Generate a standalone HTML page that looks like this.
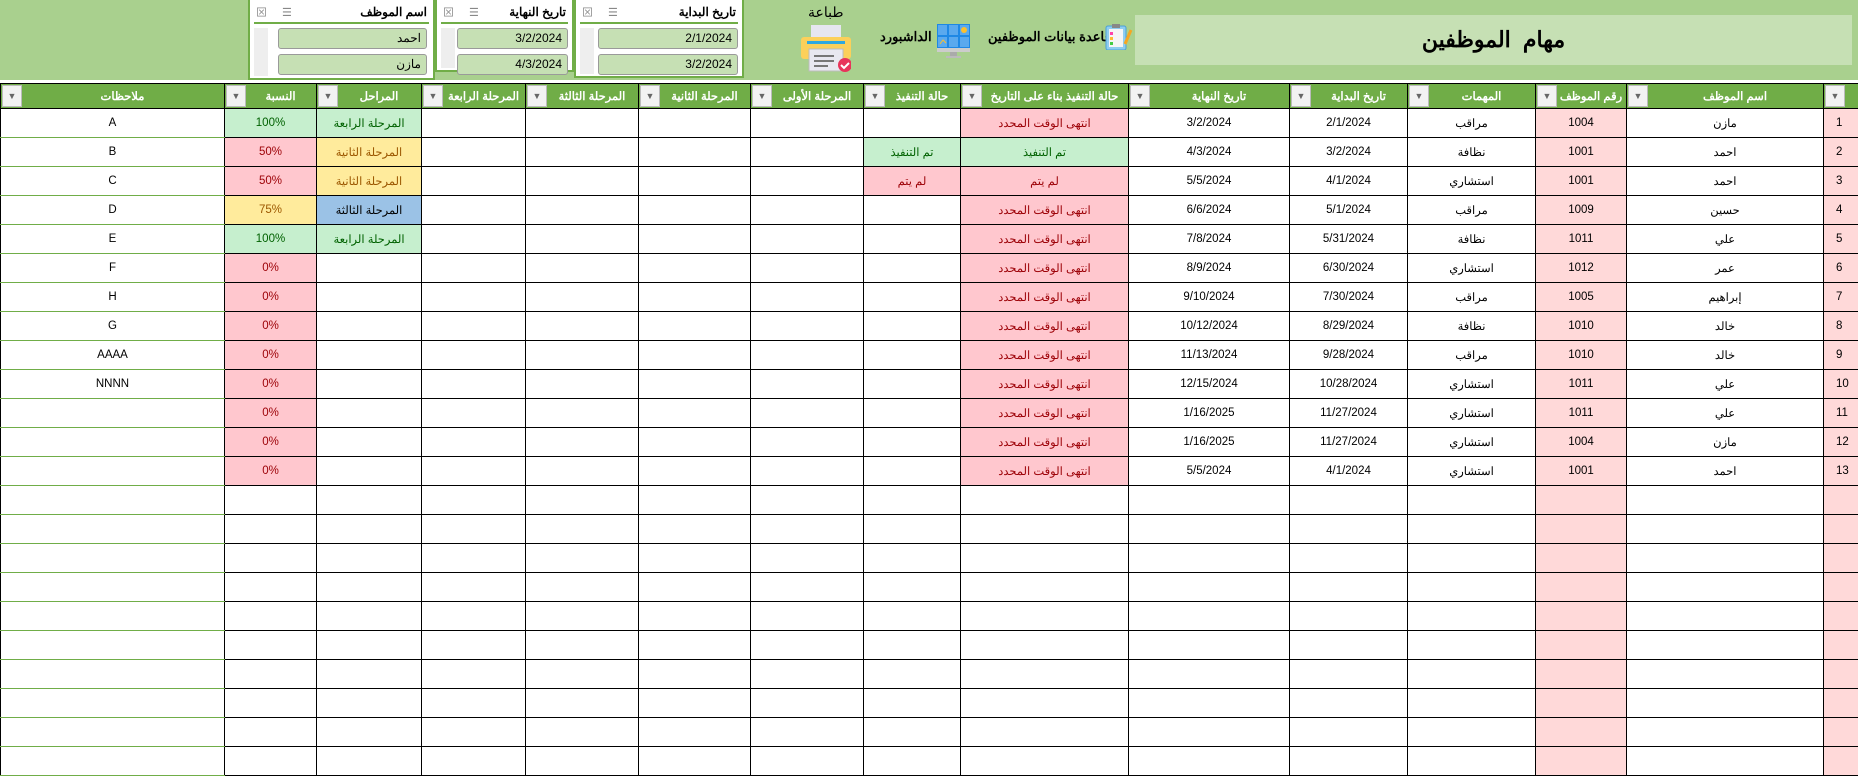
<!DOCTYPE html>
<html><head><meta charset="utf-8"><style>
*{box-sizing:border-box;margin:0;padding:0}
body{width:1858px;height:757px;overflow:hidden;background:#fff;font-family:"Liberation Sans","Noto Sans CJK SC",sans-serif;position:relative}
.top{position:absolute;left:0;top:0;width:1858px;height:80px;background:#a9d08e}
.title{position:absolute;left:1135px;top:15px;width:717px;height:50px;background:#c6e0b4;text-align:center;font-size:22px;font-weight:bold;line-height:50px;word-spacing:6px}
.lbl{position:absolute;font-size:14px;color:#000;white-space:nowrap}
.sl{position:absolute;top:0;background:#fff;border:2px solid #70ad47;border-top:none}
.sl .h{position:absolute;right:6px;top:5px;font-size:12px;font-weight:bold}
.sl .ln{position:absolute;left:4px;right:4px;top:22px;height:2px;background:#70ad47}
.sl .ic{position:absolute;left:6px;top:4px;font-size:11px;color:#888;letter-spacing:6px}
.sl .it{position:absolute;height:21px;background:#c6e0b4;border:1px solid #9a9a9a;border-radius:3px;font-size:12px;text-align:right;padding-right:5px;line-height:19px}
.sl .sb{position:absolute;left:4px;top:28px;width:14px;bottom:2px;background:#eee}
table{position:absolute;left:0;top:83px;border-collapse:collapse;table-layout:fixed;width:1858px}
td{height:29px;border:1px solid #000;font-size:11.5px;text-align:center;direction:rtl;overflow:hidden;white-space:nowrap}
tr.hd td{height:25px;background:#70ad47;color:#fff;font-weight:bold;position:relative;padding-left:20px;font-size:11.5px}
tr.hd td .dd{position:absolute;left:1px;top:1px;width:20px;height:22px;background:#f2f2f2;border:1px solid #bbb;color:#666;font-size:9px;line-height:20px;text-align:center}
td.n{border-bottom-color:#70ad47;border-top-color:#70ad47}
.pk{background:#ffc7ce;color:#9c0006}
.gr{background:#c6efce;color:#006100}
.ye{background:#ffeb9c;color:#9c5700}
.bl{background:#9bc2e6;color:#000}
.lp{background:#ffd9d9}
td.num{text-align:left;padding-left:12px;background:#ffd9d9}
</style></head><body>
<div class="top"></div>
<div class="title">مهام الموظفين</div>

<div class="lbl" style="left:808px;top:4px;font-size:14px">طباعة</div>
<svg style="position:absolute;left:801px;top:25px" width="50" height="47" viewBox="0 0 50 47">
<rect x="10" y="0" width="30" height="12" fill="#e6e6f0"/>
<rect x="0" y="12" width="50" height="22" rx="3" fill="#fcd05a"/>
<rect x="6" y="16" width="38" height="3" fill="#2fa8e0"/>
<rect x="8" y="24" width="34" height="22" fill="#e8e8f0" stroke="#bbb"/>
<rect x="13" y="30" width="20" height="2" fill="#777"/><rect x="13" y="35" width="20" height="2" fill="#777"/><rect x="13" y="40" width="14" height="2" fill="#777"/>
<circle cx="44" cy="40" r="7" fill="#e8345a"/><path d="M40 40l3 3 5-5" stroke="#fff" stroke-width="2" fill="none"/>
</svg>
<div class="lbl" style="left:880px;top:29px;font-weight:bold;font-size:13px">الداشبورد</div>
<svg style="position:absolute;left:937px;top:24px" width="33" height="34" viewBox="0 0 33 34">
<rect x="0" y="0" width="33" height="24" fill="#1e88e5"/>
<rect x="1" y="1" width="9" height="10" fill="#5aa9ee"/><rect x="12" y="1" width="9" height="10" fill="#5aa9ee"/><rect x="23" y="1" width="9" height="10" fill="#5aa9ee"/>
<rect x="1" y="13" width="9" height="10" fill="#5aa9ee"/><rect x="12" y="13" width="9" height="10" fill="#5aa9ee"/><rect x="23" y="13" width="9" height="10" fill="#5aa9ee"/>
<circle cx="27" cy="6" r="3" fill="#fbc02d"/><path d="M3 20l3-4 3 3" stroke="#fbc02d" fill="none"/>
<rect x="0" y="24" width="33" height="4" fill="#ccc"/><rect x="13" y="28" width="7" height="4" fill="#aaa"/><rect x="9" y="32" width="15" height="2" fill="#bbb"/>
</svg>
<div class="lbl" style="left:988px;top:29px;font-weight:bold;font-size:13px">قاعدة بيانات الموظفين</div>
<svg style="position:absolute;left:1105px;top:24px" width="28" height="26" viewBox="0 0 28 26">
<rect x="1" y="2" width="20" height="24" rx="2" fill="#8ecdf0" stroke="#4a9fd6"/>
<rect x="4" y="5" width="14" height="18" fill="#f5f5f5"/>
<rect x="7" y="0" width="8" height="4" fill="#888"/>
<rect x="5" y="8" width="3" height="3" fill="#f4a"/><rect x="5" y="13" width="3" height="3" fill="#fb3"/><rect x="5" y="18" width="3" height="3" fill="#4c4"/>
<path d="M26 6l-6 14" stroke="#f5a623" stroke-width="3"/>
</svg>

<div class="sl" style="left:574px;width:170px;height:78px">
<div class="h">تاريخ البداية</div><div class="ic">⊠ ☰</div><div class="ln"></div><div class="sb"></div>
<div class="it" style="left:22px;right:4px;top:28px">2/1/2024</div>
<div class="it" style="left:22px;right:4px;top:54px">3/2/2024</div>
</div>
<div class="sl" style="left:435px;width:139px;height:72px">
<div class="h">تاريخ النهاية</div><div class="ic">⊠ ☰</div><div class="ln"></div><div class="sb"></div>
<div class="it" style="left:20px;right:4px;top:28px">3/2/2024</div>
<div class="it" style="left:20px;right:4px;top:54px">4/3/2024</div>
</div>
<div class="sl" style="left:248px;width:187px;height:80px">
<div class="h">اسم الموظف</div><div class="ic">⊠ ☰</div><div class="ln"></div><div class="sb"></div>
<div class="it" style="left:28px;right:6px;top:28px">احمد</div>
<div class="it" style="left:28px;right:6px;top:54px">مازن</div>
</div>

<table>
<colgroup><col style="width:224px"><col style="width:92px"><col style="width:105px"><col style="width:104px"><col style="width:113px"><col style="width:112px"><col style="width:113px"><col style="width:97px"><col style="width:168px"><col style="width:161px"><col style="width:118px"><col style="width:128px"><col style="width:91px"><col style="width:197px"><col style="width:35px"></colgroup>
<tr class="hd"><td><span class="dd">▼</span>ملاحظات</td><td><span class="dd">▼</span>النسبة</td><td><span class="dd">▼</span>المراحل</td><td><span class="dd">▼</span>المرحلة الرابعة</td><td><span class="dd">▼</span>المرحلة الثالثة</td><td><span class="dd">▼</span>المرحلة الثانية</td><td><span class="dd">▼</span>المرحلة الأولى</td><td><span class="dd">▼</span>حالة التنفيذ</td><td><span class="dd">▼</span>حالة التنفيذ بناء على التاريخ</td><td><span class="dd">▼</span>تاريخ النهاية</td><td><span class="dd">▼</span>تاريخ البداية</td><td><span class="dd">▼</span>المهمات</td><td><span class="dd">▼</span>رقم الموظف</td><td><span class="dd">▼</span>اسم الموظف</td><td><span class="dd">▼</span></td></tr>
<tr><td class="n">A</td><td class="gr">100%</td><td class="gr">المرحلة الرابعة</td><td></td><td></td><td></td><td></td><td></td><td class="pk">انتهى الوقت المحدد</td><td>3/2/2024</td><td>2/1/2024</td><td>مراقب</td><td class="lp">1004</td><td>مازن</td><td class="num">1</td></tr>
<tr><td class="n">B</td><td class="pk">50%</td><td class="ye">المرحلة الثانية</td><td></td><td></td><td></td><td></td><td class="gr">تم التنفيذ</td><td class="gr">تم التنفيذ</td><td>4/3/2024</td><td>3/2/2024</td><td>نظافة</td><td class="lp">1001</td><td>احمد</td><td class="num">2</td></tr>
<tr><td class="n">C</td><td class="pk">50%</td><td class="ye">المرحلة الثانية</td><td></td><td></td><td></td><td></td><td class="pk">لم يتم</td><td class="pk">لم يتم</td><td>5/5/2024</td><td>4/1/2024</td><td>استشاري</td><td class="lp">1001</td><td>احمد</td><td class="num">3</td></tr>
<tr><td class="n">D</td><td class="ye">75%</td><td class="bl">المرحلة الثالثة</td><td></td><td></td><td></td><td></td><td></td><td class="pk">انتهى الوقت المحدد</td><td>6/6/2024</td><td>5/1/2024</td><td>مراقب</td><td class="lp">1009</td><td>حسين</td><td class="num">4</td></tr>
<tr><td class="n">E</td><td class="gr">100%</td><td class="gr">المرحلة الرابعة</td><td></td><td></td><td></td><td></td><td></td><td class="pk">انتهى الوقت المحدد</td><td>7/8/2024</td><td>5/31/2024</td><td>نظافة</td><td class="lp">1011</td><td>علي</td><td class="num">5</td></tr>
<tr><td class="n">F</td><td class="pk">0%</td><td></td><td></td><td></td><td></td><td></td><td></td><td class="pk">انتهى الوقت المحدد</td><td>8/9/2024</td><td>6/30/2024</td><td>استشاري</td><td class="lp">1012</td><td>عمر</td><td class="num">6</td></tr>
<tr><td class="n">H</td><td class="pk">0%</td><td></td><td></td><td></td><td></td><td></td><td></td><td class="pk">انتهى الوقت المحدد</td><td>9/10/2024</td><td>7/30/2024</td><td>مراقب</td><td class="lp">1005</td><td>إبراهيم</td><td class="num">7</td></tr>
<tr><td class="n">G</td><td class="pk">0%</td><td></td><td></td><td></td><td></td><td></td><td></td><td class="pk">انتهى الوقت المحدد</td><td>10/12/2024</td><td>8/29/2024</td><td>نظافة</td><td class="lp">1010</td><td>خالد</td><td class="num">8</td></tr>
<tr><td class="n">AAAA</td><td class="pk">0%</td><td></td><td></td><td></td><td></td><td></td><td></td><td class="pk">انتهى الوقت المحدد</td><td>11/13/2024</td><td>9/28/2024</td><td>مراقب</td><td class="lp">1010</td><td>خالد</td><td class="num">9</td></tr>
<tr><td class="n">NNNN</td><td class="pk">0%</td><td></td><td></td><td></td><td></td><td></td><td></td><td class="pk">انتهى الوقت المحدد</td><td>12/15/2024</td><td>10/28/2024</td><td>استشاري</td><td class="lp">1011</td><td>علي</td><td class="num">10</td></tr>
<tr><td class="n"></td><td class="pk">0%</td><td></td><td></td><td></td><td></td><td></td><td></td><td class="pk">انتهى الوقت المحدد</td><td>1/16/2025</td><td>11/27/2024</td><td>استشاري</td><td class="lp">1011</td><td>علي</td><td class="num">11</td></tr>
<tr><td class="n"></td><td class="pk">0%</td><td></td><td></td><td></td><td></td><td></td><td></td><td class="pk">انتهى الوقت المحدد</td><td>1/16/2025</td><td>11/27/2024</td><td>استشاري</td><td class="lp">1004</td><td>مازن</td><td class="num">12</td></tr>
<tr><td class="n"></td><td class="pk">0%</td><td></td><td></td><td></td><td></td><td></td><td></td><td class="pk">انتهى الوقت المحدد</td><td>5/5/2024</td><td>4/1/2024</td><td>استشاري</td><td class="lp">1001</td><td>احمد</td><td class="num">13</td></tr>
<tr><td class="n"></td><td></td><td></td><td></td><td></td><td></td><td></td><td></td><td></td><td></td><td></td><td></td><td class="lp"></td><td></td><td class="num"></td></tr>
<tr><td class="n"></td><td></td><td></td><td></td><td></td><td></td><td></td><td></td><td></td><td></td><td></td><td></td><td class="lp"></td><td></td><td class="num"></td></tr>
<tr><td class="n"></td><td></td><td></td><td></td><td></td><td></td><td></td><td></td><td></td><td></td><td></td><td></td><td class="lp"></td><td></td><td class="num"></td></tr>
<tr><td class="n"></td><td></td><td></td><td></td><td></td><td></td><td></td><td></td><td></td><td></td><td></td><td></td><td class="lp"></td><td></td><td class="num"></td></tr>
<tr><td class="n"></td><td></td><td></td><td></td><td></td><td></td><td></td><td></td><td></td><td></td><td></td><td></td><td class="lp"></td><td></td><td class="num"></td></tr>
<tr><td class="n"></td><td></td><td></td><td></td><td></td><td></td><td></td><td></td><td></td><td></td><td></td><td></td><td class="lp"></td><td></td><td class="num"></td></tr>
<tr><td class="n"></td><td></td><td></td><td></td><td></td><td></td><td></td><td></td><td></td><td></td><td></td><td></td><td class="lp"></td><td></td><td class="num"></td></tr>
<tr><td class="n"></td><td></td><td></td><td></td><td></td><td></td><td></td><td></td><td></td><td></td><td></td><td></td><td class="lp"></td><td></td><td class="num"></td></tr>
<tr><td class="n"></td><td></td><td></td><td></td><td></td><td></td><td></td><td></td><td></td><td></td><td></td><td></td><td class="lp"></td><td></td><td class="num"></td></tr>
<tr><td class="n"></td><td></td><td></td><td></td><td></td><td></td><td></td><td></td><td></td><td></td><td></td><td></td><td class="lp"></td><td></td><td class="num"></td></tr>
</table>
</body></html>
